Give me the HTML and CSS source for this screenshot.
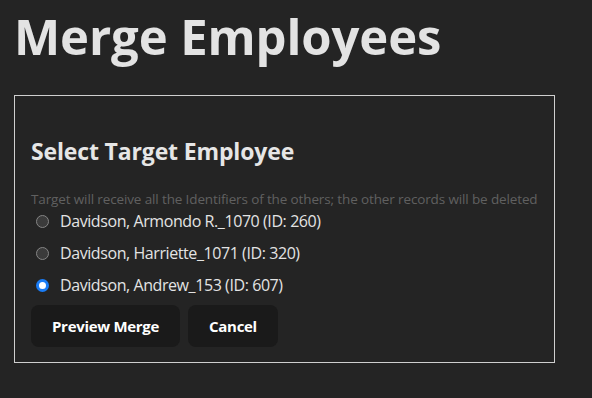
FILE: index.html
```html
<!DOCTYPE html>
<html lang="en">
<head>
<meta charset="utf-8">
<title>Merge Employees</title>
<link rel="stylesheet" href="styles.css">
</head>
<body>
<main class="page">
  <h1 class="title">Merge Employees</h1>
  <section class="panel">
    <h2 class="panel-title">Select Target Employee</h2>
    <p class="hint">Target will receive all the Identifiers of the others; the other records will be deleted</p>
    <div class="options">
      <label class="option"><input type="radio" name="target" class="radio"><span>Davidson, Armondo R._1070 (ID: 260)</span></label>
      <label class="option"><input type="radio" name="target" class="radio"><span>Davidson, Harriette_1071 (ID: 320)</span></label>
      <label class="option"><input type="radio" name="target" class="radio" checked><span>Davidson, Andrew_153 (ID: 607)</span></label>
    </div>
    <div class="actions">
      <button class="btn" type="button">Preview Merge</button>
      <button class="btn" type="button">Cancel</button>
    </div>
  </section>
</main>
</body>
</html>
```

FILE: styles.css
```css
html, body {
  margin: 0;
  background: #242424;
}
body {
  font-family: "Open Sans", "Noto Sans", sans-serif;
  color: rgba(255, 255, 255, 0.87);
}
.page {
  padding: 0 14px;
}
.title {
  margin: 0;
  padding-top: 8px;
  font-size: 49px;
  line-height: 56px;
  font-weight: 700;
  letter-spacing: -0.1px;
  color: #e3e3e3;
}
.panel {
  margin-top: 31px;
  width: 541px;
  box-sizing: border-box;
  border: 1px solid #cfcfcf;
  padding: 39px 16px 15px;
}
.panel-title {
  margin: 0;
  font-size: 23px;
  line-height: 32px;
  font-weight: 700;
  letter-spacing: -0.15px;
  color: #e6e6e6;
}
.hint {
  margin: 26px 0 0;
  font-size: 13.5px;
  line-height: 12px;
  letter-spacing: -0.13px;
  white-space: nowrap;
  color: #606060;
}
.options {
  display: flex;
  flex-direction: column;
}
.option {
  display: flex;
  align-items: center;
  gap: 11px;
  height: 32px;
  font-size: 16px;
  letter-spacing: -0.42px;
  color: #e3e3e3;
}
.radio {
  appearance: none;
  -webkit-appearance: none;
  margin: 0 0 0 5px;
  width: 13px;
  height: 13px;
  border-radius: 50%;
  border: 1px solid #858585;
  background: #3b3b3b;
  box-sizing: border-box;
}
.radio:checked {
  border: 3px solid #1a7cf5;
  background: #ffffff;
}
.actions {
  display: flex;
  gap: 8px;
  margin-top: 4px;
}
.btn {
  font-family: inherit;
  font-size: 15px;
  font-weight: 700;
  letter-spacing: -0.3px;
  color: #ffffff;
  background: #1a1a1a;
  border: 1px solid transparent;
  border-radius: 8px;
  height: 42px;
  padding: 0 20px;
}
```
